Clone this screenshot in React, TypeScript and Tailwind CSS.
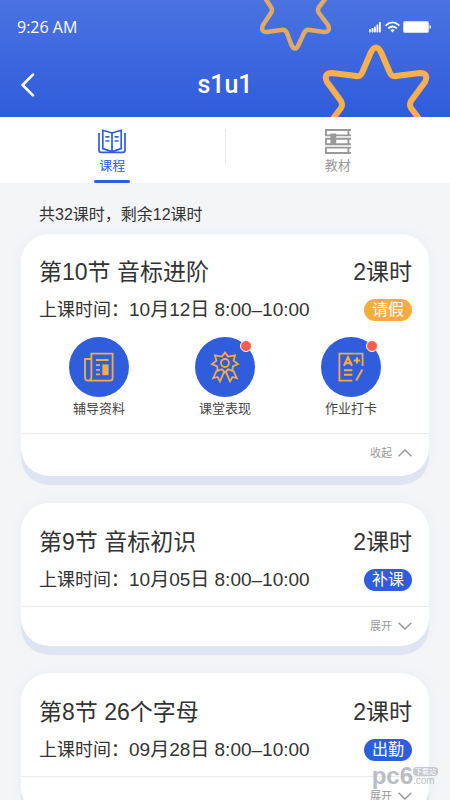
import { useState } from "react";
import clsx from "clsx";

type Lesson = {
  id: number;
  title: string;
  hours: string;
  time: string;
  status: string;
  statusClass: string;
};

const lessons: Lesson[] = [
  {
    id: 10,
    title: "第10节 音标进阶",
    hours: "2课时",
    time: "10月12日 8:00–10:00",
    status: "请假",
    statusClass: "bg-[#f6ac43]",
  },
  {
    id: 9,
    title: "第9节 音标初识",
    hours: "2课时",
    time: "10月05日 8:00–10:00",
    status: "补课",
    statusClass: "bg-[#305ddb]",
  },
  {
    id: 8,
    title: "第8节 26个字母",
    hours: "2课时",
    time: "09月28日 8:00–10:00",
    status: "出勤",
    statusClass: "bg-[#305ddb]",
  },
];

function Stars() {
  return (
    <svg
      className="absolute right-0 top-0"
      width="200"
      height="117"
      viewBox="250 0 200 117"
      fill="none"
      strokeLinejoin="round"
      aria-hidden="true"
    >
      <path
        d="M265 -2L271 7Q273 10 271 13L263 25Q260 32 267 32L281 30Q285 29 287 33L291 44Q295 53 299 44L304 33Q306 29 310 30L324 32Q331 32 328 25L319 13Q317 10 319 7L326 -2"
        stroke="#e0aa66"
        strokeWidth="4.5"
      />
      <path
        d="M332 120L341 108Q343 105 341 101L327 82Q323 73 332 73L356 76Q360 77 362 73L371 52Q376 43 381 52L390 73Q392 77 396 76L420 73Q429 73 425 82L411 101Q409 105 411 108L420 120"
        stroke="#f9b04b"
        strokeWidth="6"
      />
    </svg>
  );
}

function StatusIcons() {
  return (
    <svg width="62" height="14" viewBox="0 0 62 14" fill="#fff" aria-hidden="true">
      <rect x="0" y="9" width="1.8" height="3.4" rx=".6" />
      <rect x="2.6" y="8" width="1.8" height="4.4" rx=".6" />
      <rect x="5" y="6.4" width="1.8" height="6" rx=".6" />
      <rect x="7.5" y="4.4" width="1.8" height="8" rx=".6" />
      <rect x="10" y="2" width="1.8" height="10.4" rx=".6" />
      <g fill="none" stroke="#fff" strokeWidth="1.8">
        <path d="M16.6 5.6Q23.5 -.8 30.4 5.6" />
        <path d="M19.2 8.4Q23.5 4.6 27.8 8.4" />
      </g>
      <path d="M21.2 10Q23.5 8.4 25.8 10L23.5 12.6Z" />
      <rect x="34" y="1" width="26" height="12" rx="2" opacity=".75" />
      <rect x="35" y="2" width="24" height="10" rx="1" />
      <path d="M60.5 5Q62 5.4 62 7T60.5 9Z" />
    </svg>
  );
}

function CourseIcon() {
  return (
    <svg width="28" height="25" viewBox="0 0 28 25" fill="none" stroke="currentColor" strokeWidth="1.7" aria-hidden="true">
      <path d="M14 4L4.8 1.2V19.6L14 22.6L23.2 19.6V1.2Z" strokeLinejoin="round" />
      <path d="M14 4V22.6" />
      <path d="M7.4 7.8H11.4M7.4 12H11.4M16.6 7.8H20.6M16.6 12H20.6" />
      <path d="M1 4V21.2Q1 23.4 3.2 23.4H24.8Q27 23.4 27 21.2V4" />
    </svg>
  );
}

function BooksIcon() {
  return (
    <svg width="26" height="25" viewBox="0 0 26 25" fill="none" stroke="currentColor" strokeWidth="1.9" aria-hidden="true">
      <path d="M26 1H1V6.4H26M23.4 1V6.4" />
      <path d="M26 9.8H1V15.2H26M23.4 9.8V15.2" />
      <path d="M26 18.6H1V24H26M23.4 18.6V24" />
      <path d="M5.4 4.4H11.2V16.6L8.3 14.8L5.4 16.6Z" fill="currentColor" stroke="none" />
    </svg>
  );
}

function NewsIcon() {
  return (
    <svg width="30" height="30" viewBox="0 0 30 30" fill="none" stroke="currentColor" strokeWidth="1.8" aria-hidden="true">
      <path d="M7.4 25V1.6H28.6V26Q28.6 28.6 26 28.6H4.4Q1 28.6 1 25.2V7H7.4V25Q7.4 28.4 4.4 28.6" />
      <path d="M12 8H24.6M12 13.2H16M12 17.8H16M12 22.4H16" />
      <path d="M18.4 12.4H24.6V23.2H18.4Z" fill="currentColor" stroke="none" />
    </svg>
  );
}

function MedalIcon() {
  return (
    <svg width="30" height="32" viewBox="0 0 30 32" fill="none" stroke="currentColor" strokeWidth="1.8" aria-hidden="true">
      <path d="M15 1.6L18 5.6L25 4.4L23.6 9.6L28 13L22.8 15.4L22.4 19.8L18 18.4L15 21.6L12 18.4L7.6 19.8L7.2 15.4L2 13L6.4 9.6L5 4.4L12 5.6Z" />
      <circle cx="15" cy="12" r="4" />
      <path d="M6.8 19.4L3.2 27.2L7.6 26L10 30.4L14 21M23.2 19.4L26.8 27.2L22.4 26L20 30.4L16 21" />
    </svg>
  );
}

function HomeworkIcon() {
  return (
    <svg width="26" height="30" viewBox="0 0 26 30" fill="none" stroke="currentColor" strokeWidth="1.8" aria-hidden="true">
      <path d="M24.6 14V1.6H1.4V28.6H14.4" />
      <path d="M6 13.8L10 5.4L14 13.8M7.4 11.2H12.6" strokeWidth="2.2" />
      <path d="M15.8 8.4H22.2M19 5.2V11.6" strokeWidth="2" />
      <path d="M6 18.2H14.4M6 22.8H14.4" strokeWidth="2" />
      <path d="M24.4 17.6L18.2 28.4" strokeWidth="2" />
    </svg>
  );
}

function Chevron({ up }: { up: boolean }) {
  return (
    <svg
      className={clsx("h-2 w-3.5", up && "rotate-180")}
      viewBox="0 0 14 8"
      fill="none"
      stroke="currentColor"
      strokeWidth="1.5"
      aria-hidden="true"
    >
      <path d="M.6 .8L7 7L13.4 .8" />
    </svg>
  );
}

const actions = [
  { label: "辅导资料", icon: <NewsIcon />, dot: false },
  { label: "课堂表现", icon: <MedalIcon />, dot: true },
  { label: "作业打卡", icon: <HomeworkIcon />, dot: true },
];

function LessonCard({ lesson }: { lesson: Lesson }) {
  const [open, setOpen] = useState(lesson.id === 10);

  return (
    <article className="rounded-[28px] bg-white shadow-[0_9px_0_#dfe4f3,0_0_16px_rgba(60,80,120,0.04)]">
      <div className={clsx("pb-2.5 pl-[18px] pr-[17px] text-[#333]", open ? "pt-5" : "pt-[21px]")}>
        <div className="flex items-center justify-between text-[23px] leading-9">
          <h2>{lesson.title}</h2>
          <span>{lesson.hours}</span>
        </div>
        <div className="mt-1 flex h-8 items-center justify-between">
          <p className="flex items-baseline text-lg">
            上课时间：<time className="text-[19px]">{lesson.time}</time>
          </p>
          <span
            className={clsx(
              "flex h-[22px] w-12 items-center justify-center rounded-full text-base text-white",
              lesson.statusClass
            )}
          >
            {lesson.status}
          </span>
        </div>
      </div>
      {open && (
        <div className="flex justify-between px-12 pb-3 pt-px">
          {actions.map((action) => (
            <button key={action.label} type="button" className="flex w-15 flex-col items-center">
              <span className="relative flex size-15 items-center justify-center rounded-full bg-[#305ddb] text-[#f6ac43]">
                {action.icon}
                {action.dot && (
                  <span className="absolute right-[3px] top-[3px] size-3 rounded-full border border-white bg-[#fd5b4b]" />
                )}
              </span>
              <span className="whitespace-nowrap text-[13px] leading-6 text-[#444]">{action.label}</span>
            </button>
          ))}
        </div>
      )}
      <div
        className={clsx(
          "flex items-center justify-end border-t border-[#ececee] pl-[18px] pr-[17px]",
          open ? "h-[43px] pb-1" : "h-10 pb-0.5"
        )}
      >
        <button
          type="button"
          aria-expanded={open}
          onClick={() => setOpen(!open)}
          className="flex items-center gap-1.5 text-[11px] leading-4 text-[#999]"
        >
          {open ? "收起" : "展开"}
          <Chevron up={open} />
        </button>
      </div>
    </article>
  );
}

function Watermark() {
  return (
    <div className="pointer-events-none absolute bottom-3.5 right-3 flex items-center text-[#a9adb8] opacity-80">
      <span className="text-2xl font-bold leading-5">pc6</span>
      <span className="flex flex-col">
        <span className="rounded-sm bg-[#b8bbc4] px-0.5 text-center text-[7px] leading-[9px] text-white">下载站</span>
        <span className="text-[10px] leading-[10px]">.com</span>
      </span>
    </div>
  );
}

export default function App() {
  const [tab, setTab] = useState("course");

  return (
    <div className="relative flex h-screen flex-col overflow-hidden bg-[#f3f5f7] font-['Liberation_Sans','Noto_Sans_CJK_SC',sans-serif]">
      <header className="relative shrink-0 bg-linear-to-b from-[#4a72e0] to-[#2f5cdb] text-white">
        <Stars />
        <div className="relative flex h-[53px] items-center justify-between pl-[17px] pr-[19px]">
          <span className="font-['Open_Sans',sans-serif] text-base">9:26 AM</span>
          <StatusIcons />
        </div>
        <div className="relative flex h-16 items-center justify-center">
          <button type="button" aria-label="返回" className="absolute left-5">
            <svg width="16" height="24" viewBox="0 0 16 24" fill="none" stroke="currentColor" strokeWidth="2.6" strokeLinecap="round" strokeLinejoin="round">
              <path d="M13 1.6L2.6 12L13 22.4" />
            </svg>
          </button>
          <h1 className="font-['Roboto',sans-serif] text-[25px] font-medium">s1u1</h1>
        </div>
      </header>

      <nav className="flex h-[66px] shrink-0 bg-white text-[13px]">
        <button
          type="button"
          onClick={() => setTab("course")}
          className={clsx(
            "flex flex-1 flex-col items-center pt-3",
            tab === "course" ? "text-[#305ddb]" : "text-[#999]"
          )}
        >
          <CourseIcon />
          <span className="leading-6">课程</span>
          {tab === "course" && <span className="mt-auto h-[3px] w-9 rounded-full bg-[#305ddb]" />}
        </button>
        <span className="mt-3 h-9 w-px bg-[#e8e8ea]" />
        <button
          type="button"
          onClick={() => setTab("book")}
          className={clsx(
            "flex flex-1 flex-col items-center pt-3",
            tab === "book" ? "text-[#305ddb]" : "text-[#999]"
          )}
        >
          <BooksIcon />
          <span className="leading-6">教材</span>
          {tab === "book" && <span className="mt-auto h-[3px] w-9 rounded-full bg-[#305ddb]" />}
        </button>
      </nav>

      <main className="flex-1 overflow-y-auto px-[21px] pb-6 [scrollbar-width:none]">
        <p className="flex h-[51px] items-center px-[18px] pt-3 text-base text-[#333]">
          共32课时，剩余12课时
        </p>
        <div className="flex flex-col gap-[27px]">
          {lessons.map((lesson) => (
            <LessonCard key={lesson.id} lesson={lesson} />
          ))}
        </div>
      </main>
      <Watermark />
    </div>
  );
}
